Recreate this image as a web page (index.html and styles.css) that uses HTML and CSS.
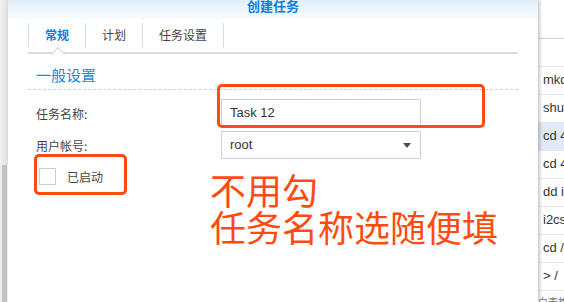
FILE: index.html
```html
<!DOCTYPE html>
<html lang="zh">
<head>
<meta charset="utf-8">
<title>创建任务</title>
<link rel="stylesheet" href="styles.css">
</head>
<body>
<div class="screen">
  <div class="strip"><div class="strip-top"></div><div class="strip-thumb"></div></div>
  <div class="dialog">
    <div class="dlg-head"><span class="dlg-title">创建任务</span></div>
    <div class="tabbar">
      <div class="tab active">常规<span class="notch"></span></div>
      <div class="tab">计划</div>
      <div class="tab">任务设置</div>
    </div>
    <div class="section">
      <div class="section-title">一般设置</div>
      <div class="form">
        <div class="row"><span class="lbl">任务名称:</span><div class="field">Task 12</div></div>
        <div class="row"><span class="lbl">用户帐号:</span><div class="field">root<span class="caret"></span></div></div>
        <div class="check-row"><span class="checkbox"></span><span class="check-lbl">已启动</span></div>
      </div>
    </div>
  </div>
  <div class="side">
    <div class="side-head"></div>
    <div class="side-row"></div>
    <div class="side-row">mkdir -p</div>
    <div class="side-row">shutdown</div>
    <div class="side-row sel">cd 4</div>
    <div class="side-row">cd 4</div>
    <div class="side-row">dd if</div>
    <div class="side-row">i2cset</div>
    <div class="side-row">cd /</div>
    <div class="side-row">&gt; /</div>
    <div class="side-foot">白表格</div>
  </div>
  <div class="mark mark-name"></div>
  <div class="mark mark-check"></div>
  <div class="note"><span class="note-line">不用勾</span><span class="note-line">任务名称选随便填</span></div>
</div>
</body>
</html>
```

FILE: styles.css
```css
body {
  margin: 0;
}

.screen {
  width: 564px;
  height: 302px;
  display: flex;
  position: relative;
  overflow: hidden;
  background: #fff;
  font-family: "Noto Sans CJK SC", sans-serif;
}

.strip {
  width: 8px;
  flex: none;
  display: flex;
  flex-direction: column;
  background: #efefef;
}

.strip-top {
  height: 165px;
  background: linear-gradient(to right, #f3f3f3, #dedede);
}

.strip-thumb {
  flex: 1;
  margin: 0 1px 0 2px;
  background: #c3c3c3;
}

.dialog {
  width: 530px;
  flex: none;
  background: #fff;
  box-shadow: 2px 0 3px rgba(0, 0, 0, 0.22);
  position: relative;
  z-index: 1;
}

.dlg-head {
  height: 20px;
  background: linear-gradient(#e0eefa, #fbfdff);
  text-align: center;
}

.dlg-title {
  display: block;
  font: bold 13px/12px "Noto Sans CJK SC", sans-serif;
  color: #0a7fdc;
}

.tabbar {
  display: flex;
  margin: 3px 20px 0;
  padding-bottom: 5px;
  border-bottom: 2px solid #dadcde;
}

.tab {
  height: 24px;
  padding: 0 16px;
  border-left: 1px solid #d5dee7;
  font: 12px/24px "Noto Sans CJK SC", sans-serif;
  color: #444;
  position: relative;
}

.tab:last-child {
  border-right: 1px solid #d5dee7;
}

.tab.active {
  color: #0b80dc;
  font-weight: bold;
}

.notch {
  position: absolute;
  left: 24px;
  top: 26px;
  width: 9px;
  height: 9px;
  background: #fff;
  border-top: 1px solid #d2d4d6;
  border-left: 1px solid #d2d4d6;
  transform: rotate(45deg);
}

.section {
  margin: 0 20px;
}

.section-title {
  margin-top: 11px;
  padding: 0 0 4px 8px;
  font: 15px/20px "Noto Sans CJK SC", sans-serif;
  color: #1a8ae0;
  border-bottom: 1px dashed #c6d6e6;
}

.form {
  padding: 9px 0 0 8px;
  display: flex;
  flex-direction: column;
  gap: 4px;
}

.row {
  display: flex;
  align-items: center;
  height: 28px;
}

.lbl {
  width: 185px;
  font-size: 12px;
  color: #444;
}

.field {
  width: 200px;
  height: 28px;
  box-sizing: border-box;
  border: 1px solid #c8d3de;
  padding-left: 8px;
  font: 13px/26px "Liberation Sans", sans-serif;
  color: #333;
  position: relative;
}

.caret {
  position: absolute;
  right: 9px;
  top: 11px;
  width: 0;
  height: 0;
  border-left: 4.5px solid transparent;
  border-right: 4.5px solid transparent;
  border-top: 5px solid #4d4d4d;
}

.check-row {
  display: flex;
  align-items: center;
  height: 18px;
  margin-top: 4px;
  padding-left: 3px;
}

.checkbox {
  width: 17px;
  height: 17px;
  box-sizing: border-box;
  border: 1px solid #c4cfdb;
  background: #fff;
}

.check-lbl {
  margin-left: 11px;
  font-size: 12px;
  color: #444;
}

.side {
  flex: 1;
  min-width: 0;
  display: flex;
  flex-direction: column;
  background: #fff;
  overflow: hidden;
}

.side-head {
  height: 39px;
  flex: none;
  box-sizing: border-box;
  border-bottom: 1px solid #c9d7e5;
}

.side-row {
  height: 28px;
  flex: none;
  box-sizing: border-box;
  border-bottom: 1px solid #e4e9ee;
  padding-left: 5px;
  font: 13px/25px "Liberation Sans", sans-serif;
  color: #333;
  white-space: nowrap;
}

.side-row.sel {
  background: #dfeaf6;
}

.side-foot {
  padding: 6px 0 0 0;
  font-size: 10px;
  line-height: 10px;
  color: #777;
  white-space: nowrap;
}

.mark {
  position: absolute;
  z-index: 2;
  box-sizing: border-box;
  border: 3px solid #ff4b12;
  border-radius: 5px;
}

.mark-name {
  left: 217px;
  top: 84px;
  width: 268px;
  height: 44px;
}

.mark-check {
  left: 34px;
  top: 154px;
  width: 93px;
  height: 41px;
}

.note {
  position: absolute;
  z-index: 2;
  left: 210px;
  top: 171px;
  display: flex;
  flex-direction: column;
  font: 36px/37px "Noto Sans CJK SC", sans-serif;
  color: #ff4b12;
}

.note-line {
  display: block;
  white-space: nowrap;
}
```
